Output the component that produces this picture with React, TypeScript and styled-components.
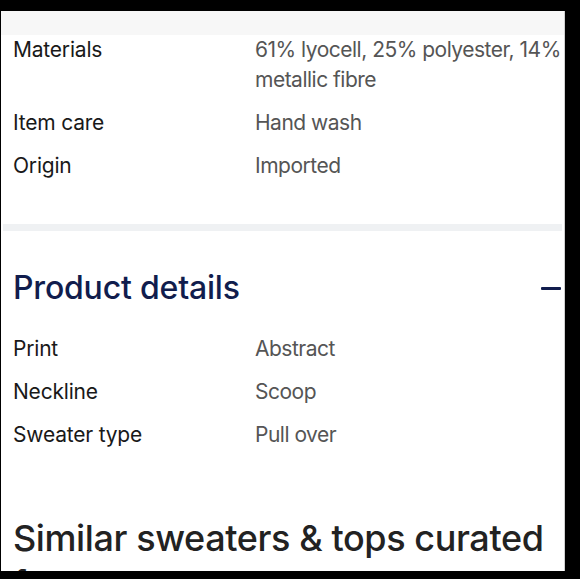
import React from "react";
import styled, { createGlobalStyle } from "styled-components";

const GlobalStyle = createGlobalStyle`
  html, body {
    margin: 0;
    padding: 0;
    background: #000;
  }
  body {
    font-family: Inter, "Noto Sans", Arial, sans-serif;
    -webkit-font-smoothing: antialiased;
  }
`;

const Frame = styled.div`
  width: 580px;
  height: 579px;
  background: #000;
  padding: 11px 15px 8px 1px;
  box-sizing: border-box;
`;

const Panel = styled.div`
  height: 100%;
  background: #fff;
  border-right: 1px solid #cfcfcf;
  box-sizing: border-box;
  overflow: hidden;
  display: flex;
  flex-direction: column;
`;

const TopStrip = styled.div`
  height: 24px;
  flex-shrink: 0;
  background: #f7f7f7;
`;

const SpecList = styled.dl`
  margin: 0;
  padding: 0 2px 0 12px;
  display: flex;
  flex-direction: column;
  gap: 13px;
`;

const SpecRow = styled.div`
  display: grid;
  grid-template-columns: 242px 1fr;
  font-size: 21px;
  line-height: 30px;
`;

const Label = styled.dt`
  margin: 0;
  color: #191919;
  letter-spacing: -0.2px;
`;

const Value = styled.dd`
  margin: 0;
  color: #555;
  letter-spacing: -0.5px;
`;

const Divider = styled.div`
  height: 7px;
  flex-shrink: 0;
  margin: 43px 2px 0;
  background: #eff1f3;
`;

const SectionHeader = styled.div`
  display: flex;
  align-items: center;
  justify-content: space-between;
  padding: 37px 3px 26px 12px;
`;

const SectionTitle = styled.h2`
  margin: 0;
  font-size: 32px;
  line-height: 40px;
  font-weight: 500;
  letter-spacing: -0.2px;
  color: #111d4d;
`;

const Collapse = styled.span`
  width: 20px;
  height: 3px;
  border-radius: 1px;
  background: #111d4d;
`;

const BigHeading = styled.h2`
  margin: 65px 0 0;
  padding: 0 12px;
  font-size: 36px;
  line-height: 46px;
  font-weight: 500;
  letter-spacing: -0.4px;
  color: #222;
`;

const specs = [
  ["Materials", "61% lyocell, 25% polyester, 14% metallic fibre"],
  ["Item care", "Hand wash"],
  ["Origin", "Imported"],
];

const details = [
  ["Print", "Abstract"],
  ["Neckline", "Scoop"],
  ["Sweater type", "Pull over"],
];

function Specs({ items }: { items: string[][] }) {
  return (
    <SpecList>
      {items.map(([label, value]) => (
        <SpecRow key={label}>
          <Label>{label}</Label>
          <Value>{value}</Value>
        </SpecRow>
      ))}
    </SpecList>
  );
}

export default function App() {
  return (
    <>
      <GlobalStyle />
      <Frame>
        <Panel>
          <TopStrip />
          <Specs items={specs} />
          <Divider />
          <SectionHeader>
            <SectionTitle>Product details</SectionTitle>
            <Collapse />
          </SectionHeader>
          <Specs items={details} />
          <BigHeading>Similar sweaters &amp; tops curated for you</BigHeading>
        </Panel>
      </Frame>
    </>
  );
}
